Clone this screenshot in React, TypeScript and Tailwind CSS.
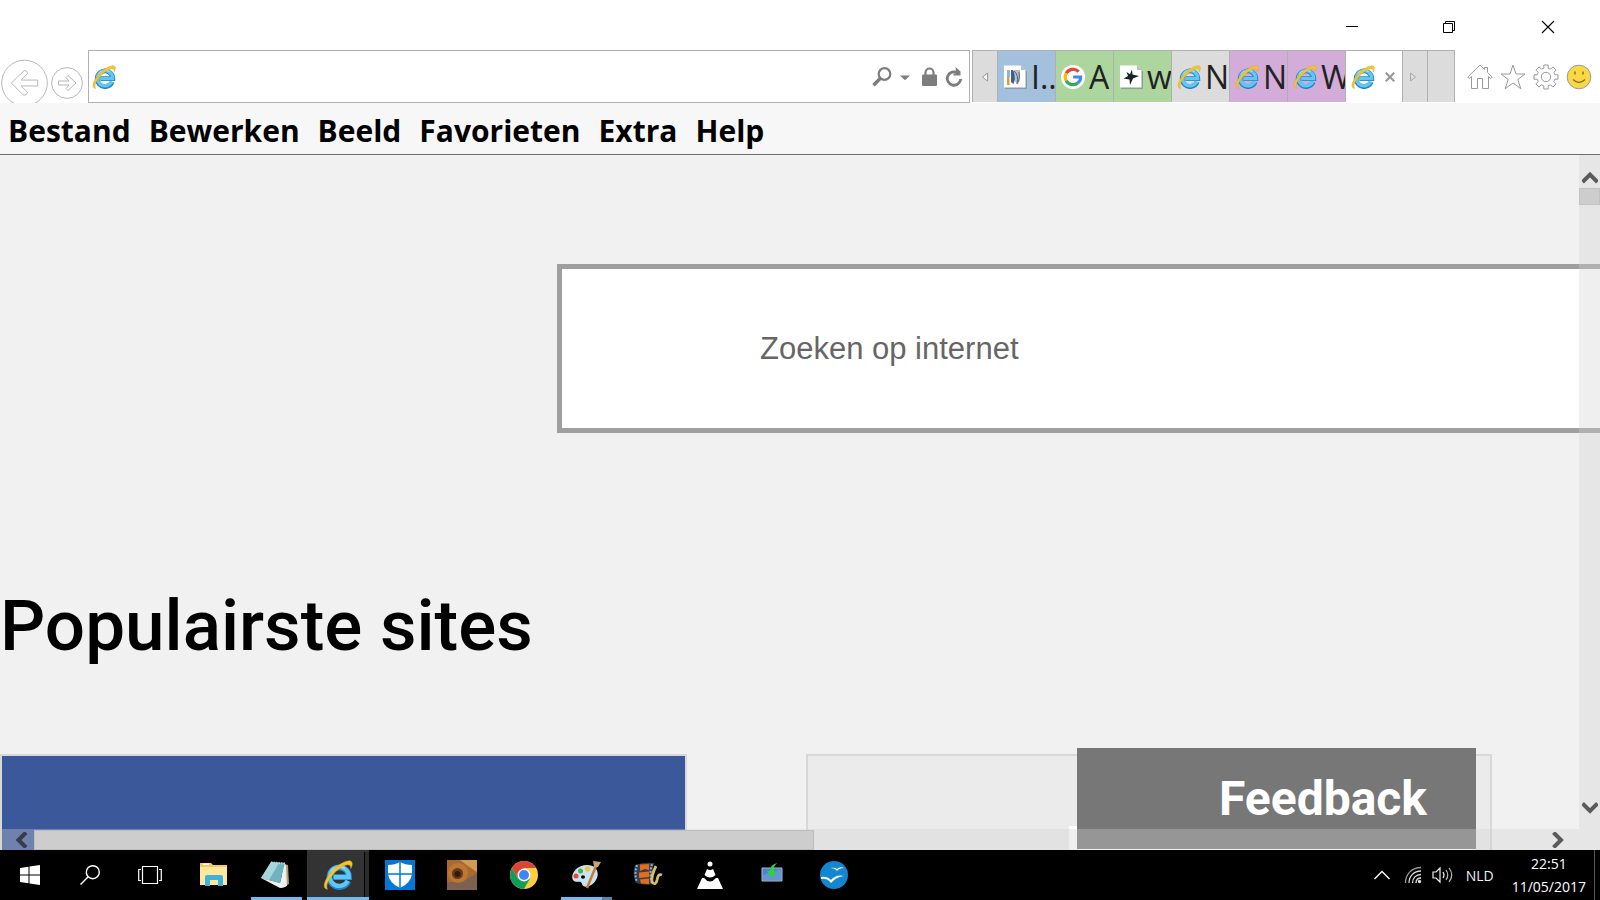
import React from "react";
import clsx from "clsx";

const menuItems = ["Bestand", "Bewerken", "Beeld", "Favorieten", "Extra", "Help"];

const tabs = [
  { label: "I..", icon: "doc", bg: "bg-[#a3c1dc]" },
  { label: "A", icon: "google", bg: "bg-[#acd69e]" },
  { label: "w", icon: "star", bg: "bg-[#acd69e]" },
  { label: "N", icon: "ie", bg: "bg-[#dcdcdc]" },
  { label: "N", icon: "ie", bg: "bg-[#d3acd9]" },
  { label: "W", icon: "ie", bg: "bg-[#d3acd9]" },
];

function IeIcon({ className = "w-6 h-6" }: { className?: string }) {
  return (
    <svg viewBox="0 0 24 24" className={clsx("shrink-0", className)} fill="none">
      <path d="M20.2 16.8A7.800 7.800 0 1 1 20.800 13.600H8.4" stroke="#1c86c9" strokeWidth="4.800" />
      <path d="M19.800 16.600A7.600 7.600 0 1 1 20.600 13.600H8.4" stroke="#62c6f1" strokeWidth="3.400" />
      <path d="M6.4 9.5A8 8 0 0 1 17.5 6.6" stroke="#a9e4fb" strokeWidth="1.2" />
      <path d="M3.600 23.4C-1.6 23 1.5 14.5 8.5 7.6C14 2.2 21.2-1 23 1.6C23.9 3 23.2 5 22.2 6.8C22.6 2.6 18.4 3 13.2 6.8C6.6 11.8 1.2 19.6 3.600 23.4Z" fill="#f6c52c" stroke="#dca21c" strokeWidth=".4" />
    </svg>
  );
}

function TabIcon({ name }: { name: string }) {
  if (name === "ie") return <IeIcon />;
  if (name === "google") {
    return (
      <svg viewBox="0 0 24 24" className="w-6 h-6 shrink-0" fill="none">
        <circle cx="12" cy="12" r="12" fill="#fff" />
        <g strokeWidth="3.2">
          <path d="M17.6 6.7A7.7 7.7 0 0 0 5.2 8.3" stroke="#ea4335" />
          <path d="M5.2 8.3A7.7 7.7 0 0 0 5.2 15.7" stroke="#fbbc05" />
          <path d="M5.2 15.7A7.7 7.7 0 0 0 17 17.8" stroke="#34a853" />
          <path d="M17 17.8A7.5 7.5 0 0 0 19.6 12H12.2" stroke="#4285f4" />
        </g>
      </svg>
    );
  }
  return (
    <svg viewBox="0 0 24 24" className="w-6 h-6 shrink-0">
      <path d="M2 2H18.5L24 6.500V24H2Z" fill="#7c8791" opacity=".7" />
      <path d="M1 .5H18L22.500 5V22.500H1Z" fill="#fff" />
      <path d="M18 .5V5H22.500Z" fill="#b5bec6" />
      {name === "doc" ? (
        <g>
          <path d="M4 5H7V12H4Z" fill="#8db5dc" />
          <path d="M4 12H6.500V20H4Z" fill="#e39a36" />
          <path d="M8 5H10L13 11L10.500 19L8 17Z" fill="#3d5f8c" />
          <path d="M11 5H17V13L15 20L12 16Z" fill="#b4bfcc" />
          <path d="M11 6Q16 10 14 19M16 7Q17 12 15.500 17" stroke="#53677c" fill="none" />
        </g>
      ) : (
        <path d="M13 4.500L13.500 9.500L20 11L14 13.500L11 20L10.500 14.500L4.500 13.500L9 11L7.500 7L11 9.200Z" fill="#16242b" />
      )}
    </svg>
  );
}

function TitleBar() {
  return (
    <header className="flex h-[50px] shrink-0 items-start justify-end pt-[19px]">
      <div className="flex gap-[82px] pr-11">
        <button aria-label="Minimaliseren">
          <svg viewBox="0 0 16 16" className="w-4 h-4"><path d="M2 7.500H14" stroke="#000" /></svg>
        </button>
        <button aria-label="Verkleinen">
          <svg viewBox="0 0 16 16" className="w-4 h-4" fill="none" stroke="#000"><path d="M1.500 4.500H10.500V13.500H1.500ZM3.500 4.500V2.500H12.500V11.500H10.500" /></svg>
        </button>
        <button aria-label="Sluiten">
          <svg viewBox="0 0 16 16" className="w-4 h-4"><path d="M2 2L14 14M14 2L2 14" stroke="#000" strokeWidth="1.100" /></svg>
        </button>
      </div>
    </header>
  );
}

function NavButtons() {
  return (
    <div className="flex h-[53px] w-[88px] shrink-0 gap-[3px] overflow-hidden pl-px pt-[9px]">
      <button aria-label="Vorige" className="h-12 w-[47px] shrink-0">
        <svg viewBox="0 0 48 48" className="w-full h-12" fill="none" stroke="#b5b5b5">
          <circle cx="24" cy="24" r="23.300" />
          <path d="M10.500 24L23.500 11.500Q25.500 10.500 26.800 13L27 14.500L20.500 21H37.500V27H20.500L27 33.500L26.500 35Q24.500 37.500 22.500 36Z" />
        </svg>
      </button>
      <button aria-label="Volgende" className="mt-2 h-8 w-8 shrink-0">
        <svg viewBox="0 0 32 32" className="w-8 h-8" fill="none" stroke="#b5b5b5">
          <circle cx="16" cy="16" r="15.400" />
          <path d="M25 16L17 8.500L15 10.500L18 14H7.500V18H18L15 21.500L17 23.500Z" />
        </svg>
      </button>
    </div>
  );
}

function AddressBar() {
  return (
    <div className="flex h-[53px] min-w-0 flex-1 items-center border border-[#b0b0b0] bg-white pl-[3px] pr-1.5">
      <IeIcon />
      <input aria-label="Adres" className="h-full min-w-0 flex-1 bg-transparent px-2 text-[20px] outline-none" />
      <div className="flex items-center gap-2 text-[#7d7d7d]">
        <button aria-label="Zoeken">
          <svg viewBox="0 0 20 20" className="w-5 h-5" fill="none" stroke="currentColor">
            <circle cx="12.500" cy="7" r="5.800" strokeWidth="2.200" />
            <path d="M8.400 11.200L1.500 18.200" strokeWidth="3.400" />
          </svg>
        </button>
        <button aria-label="Zoekopties" className="mr-1">
          <svg viewBox="0 0 10 10" className="w-[10px] h-[10px]"><path d="M0 3.500H10L5 8.200Z" fill="currentColor" /></svg>
        </button>
        <svg viewBox="0 0 15 20" className="w-[15px] h-5">
          <path d="M3.500 9V5.500A4 4 0 0 1 11.500 5.500V9" fill="none" stroke="currentColor" strokeWidth="2.200" />
          <rect x="0" y="7.500" width="15" height="11.500" rx="1" fill="currentColor" />
        </svg>
        <button aria-label="Vernieuwen">
          <svg viewBox="0 0 18 20" className="w-[18px] h-5">
            <path d="M12.500 5.800A6.700 6.700 0 1 0 15.700 12" fill="none" stroke="currentColor" strokeWidth="2.800" />
            <path d="M10.500 0L15.500 4.500V8.500H8.500V6.500H11Z" fill="currentColor" />
          </svg>
        </button>
      </div>
    </div>
  );
}

function TabStrip() {
  return (
    <div className="ml-0.5 flex h-[52px] shrink-0 border-x border-t border-[#b0b0b0]">
      <button aria-label="Tabbladen naar links" className="flex w-6 items-center justify-center bg-[#dcdcdc]">
        <svg viewBox="0 0 8 10" className="w-2 h-[10px]"><path d="M6.500 1V9L1.500 5Z" fill="#fff" stroke="#999" /></svg>
      </button>
      {tabs.map((tab, idx) => (
        <button key={idx} className={clsx("flex w-[58px] items-center gap-1 overflow-hidden border-l border-[#b0b0b0] pl-[5px]", tab.bg)}>
          <TabIcon name={tab.icon} />
          <span className="min-w-0 flex-1 overflow-hidden whitespace-nowrap text-left text-[32px] leading-[48px] text-[#222]">{tab.label}</span>
        </button>
      ))}
      <div className="flex w-[57px] items-center gap-2.5 border-l border-[#b0b0b0] bg-white pl-[5px]">
        <IeIcon />
        <button aria-label="Tabblad sluiten">
          <svg viewBox="0 0 10 10" className="w-[10px] h-[10px]"><path d="M.7 .7L9.300 9.300M9.300 .7L.7 9.300" stroke="#999" strokeWidth="2.200" /></svg>
        </button>
      </div>
      <button aria-label="Tabbladen naar rechts" className="flex w-[25px] items-center justify-center border-l border-[#b0b0b0] bg-[#dcdcdc] pr-1">
        <svg viewBox="0 0 8 10" className="w-2 h-[10px]"><path d="M1.500 1V9L6.500 5Z" fill="none" stroke="#aaa" /></svg>
      </button>
      <button aria-label="Nieuw tabblad" className="w-[27px] border-l border-[#b0b0b0] bg-[#dcdcdc]" />
    </div>
  );
}

function BrowserTools() {
  return (
    <div className="flex h-[53px] shrink-0 items-center gap-[7px] pl-3 pr-2">
      <button aria-label="Startpagina">
        <svg viewBox="0 0 26 26" className="w-[26px] h-[26px]" fill="none" stroke="#999">
          <path d="M.8 13L13 1L17.500 5.500V3.500H20.500V8.500L25.200 13L23.800 14.500L21.500 12.500V24.500H15.500V14.500H10.500V24.500H4.500V12.500L2.200 14.500Z" />
        </svg>
      </button>
      <button aria-label="Favorieten">
        <svg viewBox="0 0 26 26" className="w-[26px] h-[26px]" fill="none" stroke="#999">
          <path d="M13 1L16 10H25L17.800 15.500L20.800 24.700L13 19L5.200 24.700L8.200 15.500L1 10H10Z" />
        </svg>
      </button>
      <button aria-label="Extra">
        <svg viewBox="0 0 26 26" className="w-[26px] h-[26px]" fill="none" stroke="#999">
          <circle cx="13" cy="13" r="4.700" />
          <path d="M10.800 1H15.200V4.200L17.600 5.200L19.900 2.900L23.100 6.100L20.800 8.400L21.800 10.800H25V15.200H21.800L20.800 17.600L23.100 19.900L19.900 23.100L17.600 20.800L15.200 21.800V25H10.800V21.800L8.400 20.800L6.100 23.100L2.900 19.900L5.200 17.600L4.200 15.200H1V10.800H4.200L5.200 8.400L2.900 6.100L6.100 2.900L8.400 5.200L10.800 4.200Z" />
        </svg>
      </button>
      <button aria-label="Feedback verzenden">
        <svg viewBox="0 0 26 26" className="w-[26px] h-[26px]">
          <circle cx="13" cy="13" r="11.800" fill="#fad746" stroke="#9b9b8b" />
          <path d="M9 7.500V10.500M17 7.500V10.500" stroke="#8c7422" strokeWidth="1.500" />
          <path d="M7 15.500Q13 21.500 19 15.500" fill="none" stroke="#8c7422" strokeWidth="1.500" />
        </svg>
      </button>
    </div>
  );
}

function Arrow({ d }: { d: string }) {
  return (
    <svg viewBox="0 0 16 16" className="w-4 h-4" fill="none">
      <path d={d} stroke="#1e1e1e" strokeOpacity=".7" strokeWidth="4" />
    </svg>
  );
}

// The scrollbars are see-through and float over the page
function ScrollBars() {
  return (
    <>
      <div className="absolute right-0 top-0 bottom-[21px] flex w-[21px] flex-col items-center bg-[#d1d1d1]/35 pt-[13px] pb-[14px]">
        <button aria-label="Omhoog" className="h-5"><Arrow d="M.5 12L8 4.500L15.500 12" /></button>
        <div className="h-[17px] w-full border border-[#c2c2c2] bg-[#cdcdcd]" />
        <button aria-label="Omlaag" className="mt-auto"><Arrow d="M.5 4.500L8 12L15.500 4.500" /></button>
      </div>
      <div className="absolute inset-x-0 bottom-0 flex h-[21px] items-center bg-[#d1d1d1]/35 pl-[13px] pr-[34px]">
        <button aria-label="Links" className="w-[21px]"><Arrow d="M13 .5L5.500 8L13 15.500" /></button>
        <div className="h-5 w-[calc(50%+3px)] border border-[#bdbdbd] bg-[#cdcdcd]" />
        <button aria-label="Rechts" className="ml-auto"><Arrow d="M3.500 .5L11 8L3.500 15.500" /></button>
      </div>
    </>
  );
}

function StartPage() {
  return (
    <main className="relative flex min-h-0 flex-1 flex-col overflow-hidden bg-[#f1f1f1]">
      <div className="flex shrink-0 pl-[557px] pt-[109px]">
        <input
          type="search"
          aria-label="Zoeken op internet"
          placeholder="Zoeken op internet"
          className="h-[169px] min-w-0 flex-1 border-y-[5px] border-l-[5px] border-[#9f9f9f] bg-white pl-[198px] font-['Liberation_Sans',Arial,sans-serif] text-[31px] outline-none placeholder:text-[#666]"
        />
      </div>
      <h1 className="shrink-0 pt-[145px] font-['Roboto',sans-serif] text-[71px] font-medium leading-[96px] text-black">Populairste sites</h1>
      <div className="mt-20 flex min-h-0 flex-1 gap-[119px] pr-[108px]">
        <a href="#facebook" aria-label="Facebook" className="flex-1 border-2 border-b-0 border-[#d8d8d8] bg-[#3b589b]" />
        <a href="#site" aria-label="Site" className="flex-1 border-2 border-b-0 border-[#d8d8d8] bg-[#ebebeb]" />
      </div>
      <div className="absolute bottom-0 right-[124px] h-6 w-[407px] bg-white" />
      <button className="absolute bottom-px right-[124px] h-[101px] w-[399px] bg-[#777] pr-[49px] text-right font-['Roboto',sans-serif] text-[48px] font-bold leading-[101px] text-white">
        Feedback
      </button>
      <ScrollBars />
    </main>
  );
}

const apps = [
  {
    name: "Verkenner",
    art: (
      <g>
        <path d="M2 3H13L15 5H29V25H2Z" fill="#f5cd5c" />
        <path d="M2 7H29V25H2Z" fill="#ffe89b" />
        <path d="M5 3.500H11V5H5Z" fill="#fff" />
        <path d="M7 26V17Q7 15 9 15H23Q25 15 25 17V26H20V20H12V26Z" fill="#3eb1dc" />
      </g>
    ),
  },
  {
    name: "Kladblok",
    running: true,
    art: (
      <g>
        <path d="M24 4L28 5L29 24L23 27Z" fill="#b79b72" />
        <path d="M23 3L26 5L27 26L21 28Z" fill="#e6ecec" />
        <path d="M11 2L25 3L20 23L1 18Z" fill="#6fb3c1" />
        <path d="M11 2L19 3L9 20L1 18Z" fill="#a9d6dd" />
        <path d="M1 18L20 23L25 4L25.500 27L20 28Z" fill="#eef3f3" />
        <path d="M11 2.500L25 3.500" stroke="#ccc" strokeWidth="2" strokeDasharray="1.500 1" />
      </g>
    ),
  },
  { name: "Internet Explorer", running: true, active: true, art: null },
  {
    name: "Windows Defender",
    art: (
      <g>
        <path d="M1 0H31V30H1Z" fill="#0078d7" />
        <path d="M16 2Q21 5 28 5V14Q27 23 16 28Q5 23 4 14V5Q11 5 16 2Z" fill="#fff" />
        <path d="M16 1V29M3 14H29" stroke="#0078d7" strokeWidth="1.500" />
      </g>
    ),
  },
  {
    name: "Foto",
    art: (
      <g>
        <path d="M1 0H31V30H1Z" fill="#a8692f" />
        <path d="M14 0H31V12L22 6Z" fill="#d19a54" />
        <path d="M1 22L16 22L31 13V30H1Z" fill="#7d6050" />
        <circle cx="12" cy="13" r="10" fill="#c77c38" opacity=".7" />
        <circle cx="11.500" cy="13.500" r="5.500" fill="#67391b" />
        <circle cx="11.500" cy="14" r="3" fill="#2f1a10" />
      </g>
    ),
  },
  {
    name: "Chrome",
    art: (
      <g>
        <circle cx="16" cy="15" r="14" fill="#ffcd41" />
        <path d="M3.900 8A14 14 0 0 1 28.100 8H16L10 18Z" fill="#db4437" />
        <path d="M3.900 8A14 14 0 0 0 16 29L22 18.500L10 18.500Z" fill="#0f9d58" />
        <circle cx="16" cy="15" r="6.500" fill="#fff" />
        <circle cx="16" cy="15" r="5" fill="#4285f4" />
      </g>
    ),
  },
  {
    name: "Paint",
    running: true,
    grouped: true,
    art: (
      <g>
        <path d="M17 5C27 5 30 13 26 20C22 27 13 29 12 24C11 20 8 23 4 21C-1 17 5 5 17 5Z" fill="#c9e3f4" />
        <ellipse cx="13" cy="17" rx="2" ry="1.800" fill="#000" />
        <circle cx="6" cy="16" r="2.500" fill="#df4b36" />
        <circle cx="10.500" cy="11" r="2.500" fill="#4cae4f" />
        <circle cx="17.500" cy="9" r="2.700" fill="#eec63b" />
        <path d="M26 6L17 28" stroke="#c87b32" strokeWidth="2.500" />
        <path d="M23 1L31 2L28 7L24 7Z" fill="#c5a474" />
      </g>
    ),
  },
  {
    name: "Movie Maker",
    art: (
      <g>
        <path d="M3 5Q12 2 22 3Q19 13 22 24Q12 26 4 23Q0 14 3 5Z" fill="#31404f" />
        <path d="M8 4.500L17 4V10L13 9L8 11ZM7 12.500L17 11.500V17L7 18ZM8 19.500L17 18.500V24L9 23.500Z" fill="#e66a1f" />
        <path d="M5 5Q2 14 5 22M20 4Q17 13 20 23" fill="none" stroke="#8bb2d0" strokeWidth="2" strokeDasharray="2 1.500" />
        <path d="M24 6Q19 16 20 22Q24 26 25 20Q26 13 30 15" fill="none" stroke="#d9bd67" strokeWidth="2.800" />
      </g>
    ),
  },
  {
    name: "VLC",
    art: (
      <g fill="#fff">
        <circle cx="16" cy="4" r="2.500" />
        <path d="M13 9Q16 11 19 9L21.500 15Q16 20 10.500 15Z" />
        <path d="M8 18H10Q16 25 22 18H24L29 29H3Z" />
      </g>
    ),
  },
  {
    name: "Download",
    art: (
      <g>
        <path d="M6 8H26V21H6Z" fill="#4c82cc" stroke="#a7b9cf" />
        <path d="M7 15L25 9V20H7Z" fill="#7ba7dd" opacity=".5" />
        <path d="M22 3Q17 5 18 11H21L16 18L11 11H14Q14 4 22 3Z" fill="#2fd045" />
      </g>
    ),
  },
  {
    name: "OpenOffice",
    art: (
      <g>
        <circle cx="16" cy="15" r="14" fill="#1286cf" />
        <path d="M12 8Q17 7 19 9Q22 6 26 8Q21 8 19 11Q17 8 12 8ZM3 17Q9 16 13 20Q18 14 26 16Q18 17 13 23Q9 18 3 19Z" fill="#fff" />
      </g>
    ),
  },
];

function Taskbar() {
  return (
    <footer className="flex h-[50px] shrink-0 bg-black text-white">
      <div className="mr-[3px] flex">
        <button aria-label="Start" className="flex w-[60px] items-center justify-center">
          <svg viewBox="0 0 20 20" className="w-5 h-5" fill="#fff"><path d="M0 3L8.500 1.800V9.500H0ZM9.500 1.600L20 0V9.500H9.500ZM0 10.500H8.500V18.200L0 17ZM9.500 10.500H20V20L9.500 18.400Z" /></svg>
        </button>
        <button aria-label="Zoeken" className="flex w-[60px] items-center justify-center">
          <svg viewBox="0 0 20 20" className="w-5 h-5" fill="none" stroke="#fff" strokeWidth="1.400"><circle cx="12.800" cy="7.200" r="6.500" /><path d="M8.200 11.800L.5 19.500" /></svg>
        </button>
        <button aria-label="Taakweergave" className="flex w-[60px] items-center justify-center">
          <svg viewBox="0 0 24 20" className="w-6 h-5" fill="none" stroke="#fff" strokeWidth="1.200"><path d="M4.500 1.500H19.500V18.500H4.500ZM3 4.500H.7V15.500H3M21 4.500H23.300V15.500H21" /></svg>
        </button>
      </div>
      {apps.map(app => (
        <button key={app.name} aria-label={app.name} className={clsx("flex w-[62px] flex-col items-center", app.active && "bg-[#333]")}>
          <span className={clsx("flex h-[47px] w-full items-center justify-center pt-0.5", app.active && "pl-[5px]")}>
            {app.art ? <svg viewBox="0 0 32 30" className="w-8 h-[30px]">{app.art}</svg> : <IeIcon className="mx-auto w-[30px] h-[30px]" />}
            {app.active && <span className="h-full w-[5px] border-l border-black bg-[#2b2b2b]" />}
          </span>
          {app.running && (
            <span className={clsx("flex h-[3px] justify-end bg-[#76b9ed]", app.active ? "w-full" : "w-[51px]")}>
              {app.grouped && <span className="w-[10px] bg-[#5589b0]" />}
            </span>
          )}
        </button>
      ))}
      <div className="ml-auto flex items-center text-[14px]">
        <button aria-label="Verborgen pictogrammen" className="mr-3">
          <svg viewBox="0 0 20 20" className="w-5 h-5" fill="none" stroke="#fff" strokeWidth="1.400"><path d="M2.500 14L10 6.500L17.500 14" /></svg>
        </button>
        <button aria-label="Netwerk" className="mr-2.5">
          <svg viewBox="0 0 18 18" className="w-[18px] h-[18px]" fill="none" stroke="#ddd" strokeWidth="1.300">
            <path d="M1.500 17C1.500 8 8 1.500 17 1.500" stroke="#999" /><path d="M5 17C5 10 10 5 17 5M8.500 17C8.500 12 12 8.500 17 8.500M12 17C12 14 14 12 17 12" /><circle cx="15.500" cy="15.500" r="1" fill="#fff" />
          </svg>
        </button>
        <button aria-label="Volume" className="mr-3">
          <svg viewBox="0 0 22 18" className="w-[22px] h-[18px]" fill="none" stroke="#eee" strokeWidth="1.200">
            <path d="M1 6H4L8 2V16L4 12H1ZM11 6Q13 9 11 12" /><path d="M14 4Q17.500 9 14 14M17 2Q22.500 9 17 16" stroke="#bbb" />
          </svg>
        </button>
        <button className="mr-[18px] text-[#eee]">NLD</button>
        <button className="mr-2 flex flex-col items-center leading-[23px]">
          <time>22:51</time>
          <time>11/05/2017</time>
        </button>
        <div className="mr-[5px] h-full w-px bg-[#555]" />
      </div>
    </footer>
  );
}

export default function App() {
  return (
    <div className="flex h-screen flex-col overflow-hidden bg-white font-['Open_Sans','Noto_Sans',sans-serif]">
      <TitleBar />
      <div className="flex shrink-0">
        <NavButtons />
        <AddressBar />
        <TabStrip />
        <BrowserTools />
      </div>
      <nav className="flex h-[52px] shrink-0 items-center gap-[18px] border-b border-[#6e6e6e] bg-[#f7f7f7] pl-2 pt-1 text-[30px] font-bold text-black">
        {menuItems.map(item => (
          <button key={item}>{item}</button>
        ))}
      </nav>
      <StartPage />
      <Taskbar />
    </div>
  );
}
